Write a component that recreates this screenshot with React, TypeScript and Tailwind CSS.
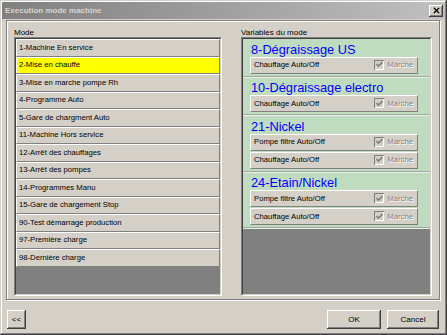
import { X } from "lucide-react";

const modes = [
    "1-Machine En service",
    "2-Mise en chauffe",
    "3-Mise en marche pompe Rh",
    "4-Programme Auto",
    "5-Gare de chargment Auto",
    "11-Machine Hors service",
    "12-Arrêt des chauffages",
    "13-Arrêt des pompes",
    "14-Programmes Manu",
    "15-Gare de chargement Stop",
    "90-Test démarrage production",
    "97-Première charge",
    "98-Dernière charge",
];

const sections = [
    { title: "8-Dégraissage US", rows: ["Chauffage Auto/Off"] },
    { title: "10-Dégraissage electro", rows: ["Chauffage Auto/Off"] },
    { title: "21-Nickel", rows: ["Pompe filtre Auto/Off", "Chauffage Auto/Off"] },
    { title: "24-Etain/Nickel", rows: ["Pompe filtre Auto/Off", "Chauffage Auto/Off"] },
];

const raised =
    "shadow-[inset_-1px_-1px_0_#404040,inset_1px_1px_0_#ffffff,inset_-2px_-2px_0_#808080,inset_2px_2px_0_#d4d0c8]";

const Check = () => (
    <span className="w-[10px] h-[10px] bg-[#d4d0c8] shadow-[inset_1px_1px_0_#808080,inset_-1px_-1px_0_#ffffff] flex items-center justify-center">
        <svg width="7" height="7" viewBox="0 0 7 7">
            <path d="M0.5 3 L2.5 5 L6.5 1" stroke="#808080" strokeWidth="1.6" fill="none" />
        </svg>
    </span>
);

const Button = ({ label, w }: { label: string; w: string }) => (
    <button className={`${w} h-[19px] bg-[#d4d0c8] ${raised} text-[8px] text-black flex items-center justify-center`}>
        {label}
    </button>
);

export default function App() {
    return (
        <div
            className={`w-[447px] h-[335px] bg-[#d4d0c8] p-[2px] flex flex-col shadow-[inset_-1px_-1px_0_#404040,inset_1px_1px_0_#d4d0c8,inset_-2px_-2px_0_#808080,inset_2px_2px_0_#ffffff] text-black`}
            style={{ fontFamily: '"Liberation Sans", Arial, sans-serif' }}
        >
            <div className="h-[17px] bg-gradient-to-r from-[#808080] to-[#c0c0c0] flex items-center justify-between pl-[3px] pr-[2px]">
                <span className="text-[8px] font-bold text-[#d8d4cc]">Execution mode machine</span>
                <span className={`w-[14px] h-[12px] bg-[#d4d0c8] ${raised} flex items-center justify-center`}>
                    <X className="w-[9px] h-[9px]" strokeWidth={3.5} />
                </span>
            </div>

            <div className="mt-[1px] ml-[4px] mr-[5px] h-[280px] border border-[#808080] shadow-[inset_1px_1px_0_#ffffff,1px_1px_0_#ffffff] pl-[7px] pr-[7px] pt-[7px] flex gap-[19px]">
                <div className="w-[208px] flex flex-col">
                    <p className="text-[8px] leading-[9px] h-[9px]">Mode</p>
                    <div className="h-[259px] bg-[#808080] border border-[#808080] border-r-white border-b-white">
                        <div className="border border-[#404040] border-r-[#d4d0c8] border-b-[#d4d0c8] h-full">
                            {modes.map((m, i) => (
                                <div
                                    key={m}
                                    className={`h-[17.5px] flex items-center pl-[2px] text-[7.7px] border border-white border-b-[#808080] border-r-[#808080] ${
                                        i === 1 ? "bg-[#ffff00]" : "bg-[#d4d0c8]"
                                    }`}
                                >
                                    {m}
                                </div>
                            ))}
                        </div>
                    </div>
                </div>

                <div className="w-[191px] flex flex-col">
                    <p className="text-[8px] leading-[9px] h-[9px]">Variables du mode</p>
                    <div className="h-[259px] bg-[#808080] border border-[#808080] border-r-white border-b-white">
                        <div className="border border-[#404040] border-r-[#d4d0c8] border-b-[#d4d0c8] h-full">
                            {sections.map((s) => (
                                <div
                                    key={s.title}
                                    className="bg-[#c0dcc0] border-b border-b-[#e8f0e8] shadow-[inset_0_-1px_0_#a0a8a0] pl-[7px] pb-[3px]"
                                >
                                    <div className="h-[17.5px] flex items-end pl-[1px] text-[12.8px] leading-[15px] text-[#0000ff]">
                                        {s.title}
                                    </div>
                                    <div className="flex flex-col gap-[1px]">
                                        {s.rows.map((r, i) => (
                                            <div
                                                key={i}
                                                className="w-[168px] h-[17px] bg-[#d4d0c8] border border-white border-r-[#808080] border-b-[#808080] flex items-center justify-between pl-[3px] pr-[4px]"
                                            >
                                                <span className="text-[7.7px]">{r}</span>
                                                <span className="flex items-center gap-[3px]">
                                                    <Check />
                                                    <span className="text-[7.7px] text-[#808080] [text-shadow:1px_1px_0_#ffffff]">
                                                        Marche
                                                    </span>
                                                </span>
                                            </div>
                                        ))}
                                    </div>
                                </div>
                            ))}
                        </div>
                    </div>
                </div>
            </div>

            <div className="flex items-center justify-between mt-[10px] pl-[5px] pr-[6px]">
                <Button label="<<" w="w-[19px]" />
                <div className="flex gap-[6px]">
                    <Button label="OK" w="w-[54px]" />
                    <Button label="Cancel" w="w-[52px]" />
                </div>
            </div>
        </div>
    );
}
